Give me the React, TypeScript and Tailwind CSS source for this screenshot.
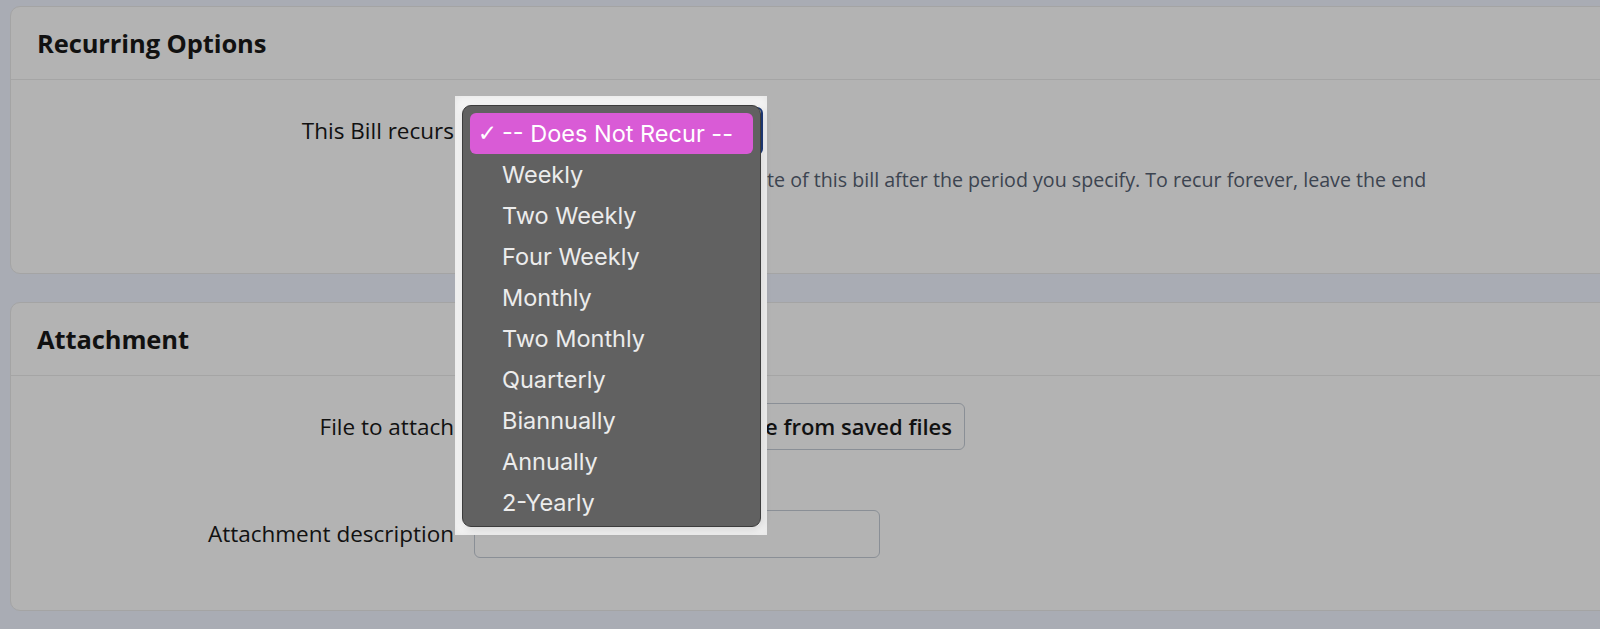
const OPTIONS = [
  "-- Does Not Recur --",
  "Weekly",
  "Two Weekly",
  "Four Weekly",
  "Monthly",
  "Two Monthly",
  "Quarterly",
  "Biannually",
  "Annually",
  "2-Yearly",
];

const Card = ({ title, children, className }: { title: string; children: React.ReactNode; className?: string }) => (
  <section className={`w-[1620px] rounded-[10px] border border-[#a4a4a4] bg-[#b3b3b3] ${className ?? ""}`}>
    <header className="flex h-[73px] items-center border-b border-[#a5a5a5] pl-[26px]">
      <h2 className="text-[25.5px] font-bold tracking-[-0.1px] text-[#111]">{title}</h2>
    </header>
    {children}
  </section>
);

const Row = ({ label, children, className }: { label: string; children: React.ReactNode; className?: string }) => (
  <div className={`flex items-start ${className ?? ""}`}>
    <label className="w-[443px] shrink-0 text-right text-[22.5px] leading-[48px] text-[#111]">{label}</label>
    <div className="ml-5">{children}</div>
  </div>
);

// the open native <select> popup, drawn over the page
const RecurMenu = () => (
  <div className="absolute left-[455px] top-[96px] h-[439px] w-[312px] bg-[#f5f5f5] pl-[7px] pt-[9px] shadow-[inset_0_0_10px_rgba(0,0,0,0.07)]">
    <ul className="relative z-30 h-[422px] w-[299px] rounded-[9px] border border-[#3c3c3c] bg-[#616161] px-[7px] pt-[7px] font-['Inter',sans-serif] text-[23.5px] text-[#ececec] shadow-[2px_3px_8px_rgba(0,0,0,0.12)]">
      {OPTIONS.map((option, index) => (
        <li
          key={option}
          className={`flex h-[41px] items-center rounded-[6px] ${index === 0 ? "bg-[#d95bd6] text-white" : ""}`}
        >
          <span className="flex w-[32px] justify-center pl-[3px] font-['DejaVu_Sans',sans-serif] text-[23px] font-bold">
            {index === 0 ? "✓" : ""}
          </span>
          {option}
        </li>
      ))}
    </ul>
  </div>
);

export default function App() {
  return (
    <div className="relative h-[629px] w-[1600px] overflow-hidden bg-[#a9acb4] pl-[10px] pt-[6px] font-['Open_Sans',sans-serif]">
      <Card title="Recurring Options">
        <div className="h-[193px] pt-[27px]">
          <Row label="This Bill recurs">
            <div className="relative z-20 h-[48px] w-[289px] rounded-md border-2 border-[#1e3a78] px-3 text-[22px] leading-[44px]">
              -- Does Not Recur --
            </div>
            <p className="mt-[12px] w-[980px] text-[19.65px] leading-[26px] text-[#3c4450]">
              A clone is created on the due date of this bill after the period you specify. To recur forever, leave the end date
              blank.
            </p>
          </Row>
        </div>
      </Card>

      <Card title="Attachment" className="mt-[28px]">
        <div className="h-[234px] pt-[27px]">
          <Row label="File to attach">
            <button className="flex h-[47px] w-[491px] items-center justify-end rounded-md border border-[#8a8f96] px-3 text-[22px] font-semibold text-[#111]">
              Choose a file from saved files
            </button>
          </Row>
          <Row label="Attachment description" className="mt-[59px]">
            <div className="h-[48px] w-[406px] rounded-md border border-[#8a8f96]" />
          </Row>
        </div>
      </Card>

      <RecurMenu />
    </div>
  );
}
